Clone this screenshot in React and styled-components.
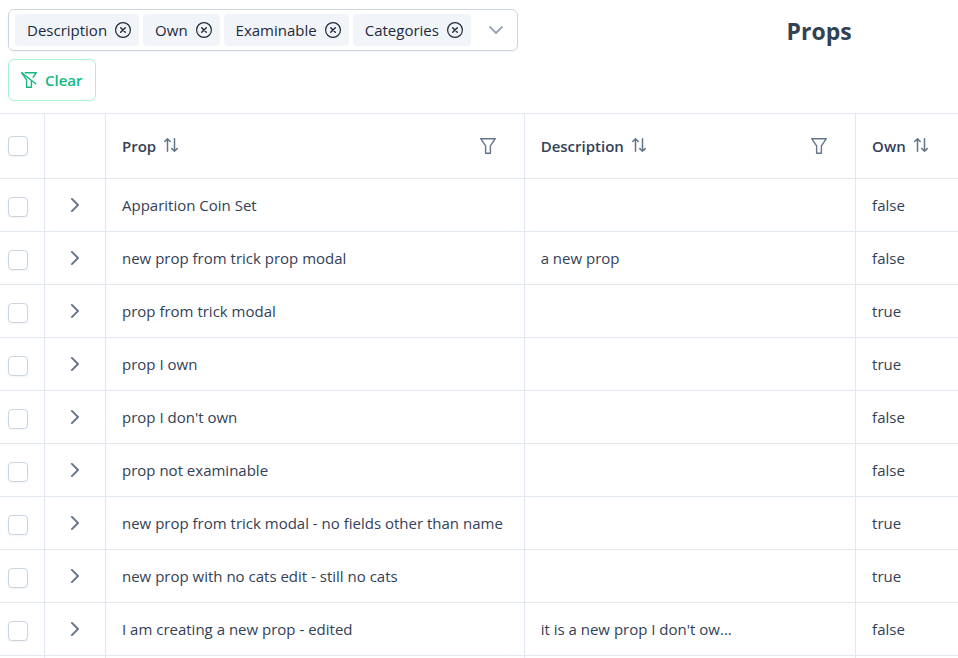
import React, { useState } from "react";
import styled, { createGlobalStyle } from "styled-components";

const GlobalStyle = createGlobalStyle`
  * {
    box-sizing: border-box;
  }

  body {
    margin: 0;
    overflow: hidden;
    background: #ffffff;
    color: #334155;
    font-family: "Open Sans", "Noto Sans", sans-serif;
    font-size: 15px;
    line-height: 24px;
  }

  button {
    font: inherit;
    cursor: pointer;
  }
`;

const initialProps = [
  { id: 1, name: "Apparition Coin Set", description: "", own: false },
  { id: 2, name: "new prop from trick prop modal", description: "a new prop", own: false },
  { id: 3, name: "prop from trick modal", description: "", own: true },
  { id: 4, name: "prop I own", description: "", own: true },
  { id: 5, name: "prop I don't own", description: "", own: false },
  { id: 6, name: "prop not examinable", description: "", own: false },
  { id: 7, name: "new prop from trick modal - no fields other than name", description: "", own: true },
  { id: 8, name: "new prop with no cats edit - still no cats", description: "", own: true },
  { id: 9, name: "I am creating a new prop - edited", description: "it is a new prop I don't ow...", own: false },
];

const allColumns = ["Description", "Own", "Examinable", "Categories"];

function TimesCircleIcon() {
  return (
    <svg width="16" height="16" viewBox="0 0 16 16" fill="none" stroke="currentColor" strokeLinecap="round">
      <circle cx="8" cy="8" r="7.4" strokeWidth="1.2" />
      <path d="M5.7 5.7l4.6 4.6M10.3 5.7l-4.6 4.6" strokeWidth="1.4" />
    </svg>
  );
}

function ChevronDownIcon() {
  return (
    <svg width="14" height="14" viewBox="0 0 14 14" fill="none" stroke="currentColor" strokeWidth="1.8" strokeLinecap="round" strokeLinejoin="round">
      <path d="M0.9 3.9L7 10l6.1-6.1" />
    </svg>
  );
}

function ChevronRightIcon() {
  return (
    <svg width="14" height="14" viewBox="0 0 14 14" fill="none" stroke="currentColor" strokeWidth="1.9" strokeLinecap="round" strokeLinejoin="round">
      <path d="M3.9 0.9L10 7l-6.1 6.1" />
    </svg>
  );
}

function SortIcon() {
  return (
    <svg width="14" height="16" viewBox="0 0 14 16" fill="none" stroke="currentColor" strokeWidth="1.5" strokeLinecap="round" strokeLinejoin="round">
      <path d="M3.5 13.3V0.8M0.8 3.5L3.5 0.8l2.7 2.7" />
      <path d="M10.5 0.8v12.5M7.8 10.6l2.7 2.7 2.7-2.7" />
    </svg>
  );
}

function FilterIcon() {
  return (
    <svg width="16" height="16" viewBox="0 0 16 16" fill="none" stroke="currentColor" strokeWidth="1.4" strokeLinejoin="round">
      <path d="M0.7 0.7h14.6L10.4 7.8v7.5H5.6V7.8z" />
    </svg>
  );
}

function FilterSlashIcon() {
  return (
    <svg width="16" height="16" viewBox="0 0 16 16" fill="none" stroke="currentColor" strokeWidth="1.4" strokeLinecap="round" strokeLinejoin="round">
      <path d="M4.2 0.7h11.1l-3.2 4.6" />
      <path d="M0.7 0.7l4.9 7.1v7.5h4.8V8.6" />
      <path d="M0.7 0.7l14 11" />
    </svg>
  );
}

export default function App() {
  const [columns, setColumns] = useState(allColumns);
  const [selected, setSelected] = useState([]);

  const removeColumn = (name) => {
    setColumns(columns.filter((column) => column !== name));
  };

  const toggleRow = (id) => {
    setSelected(selected.includes(id) ? selected.filter((item) => item !== id) : [...selected, id]);
  };

  const toggleAll = () => {
    setSelected(selected.length === initialProps.length ? [] : initialProps.map((prop) => prop.id));
  };

  return (
    <>
      <GlobalStyle />
      <Header>
        <Controls>
          <MultiSelect>
            {columns.map((column) => (
              <Chip key={column}>
                {column}
                <ChipRemove type="button" aria-label={`Remove ${column}`} onClick={() => removeColumn(column)}>
                  <TimesCircleIcon />
                </ChipRemove>
              </Chip>
            ))}
            <Trigger type="button" aria-label="Choose columns" onClick={() => setColumns(allColumns)}>
              <ChevronDownIcon />
            </Trigger>
          </MultiSelect>
          <ClearButton type="button" onClick={() => setSelected([])}>
            <FilterSlashIcon />
            Clear
          </ClearButton>
        </Controls>
        <Title>Props</Title>
      </Header>

      <Table>
        <colgroup>
          <Col $width="45px" />
          <Col $width="61px" />
          <Col $width="43.7%" />
          <Col $width="34.6%" />
          <Col />
        </colgroup>
        <thead>
          <tr>
            <HeadCell $narrow>
              <Checkbox
                type="checkbox"
                aria-label="Select all props"
                checked={selected.length === initialProps.length}
                onChange={toggleAll}
              />
            </HeadCell>
            <HeadCell />
            <HeadCell>
              <ColumnHeader>
                <SortButton type="button">
                  Prop <SortIcon />
                </SortButton>
                <IconButton type="button" aria-label="Filter by prop">
                  <FilterIcon />
                </IconButton>
              </ColumnHeader>
            </HeadCell>
            <HeadCell>
              <ColumnHeader>
                <SortButton type="button">
                  Description <SortIcon />
                </SortButton>
                <IconButton type="button" aria-label="Filter by description">
                  <FilterIcon />
                </IconButton>
              </ColumnHeader>
            </HeadCell>
            <HeadCell>
              <ColumnHeader>
                <SortButton type="button">
                  Own <SortIcon />
                </SortButton>
              </ColumnHeader>
            </HeadCell>
          </tr>
        </thead>
        <tbody>
          {initialProps.map((prop) => (
            <tr key={prop.id}>
              <CheckCell>
                <Checkbox
                  type="checkbox"
                  aria-label={`Select ${prop.name}`}
                  checked={selected.includes(prop.id)}
                  onChange={() => toggleRow(prop.id)}
                />
              </CheckCell>
              <Cell>
                <IconButton type="button" aria-label={`Expand ${prop.name}`}>
                  <ChevronRightIcon />
                </IconButton>
              </Cell>
              <Cell>{prop.name}</Cell>
              <Cell>{prop.description}</Cell>
              <Cell>{String(prop.own)}</Cell>
            </tr>
          ))}
          {/* keeps the column lines going below the last prop */}
          <tr>
            <Cell />
            <Cell />
            <Cell />
            <Cell />
            <Cell />
          </tr>
        </tbody>
      </Table>
    </>
  );
}

const Header = styled.header`
  display: grid;
  grid-template-columns: 13fr 5fr;
  padding: 9px 8px 12px;
`;

const Controls = styled.div`
  display: flex;
  flex-direction: column;
  align-items: flex-start;
  gap: 8px;
`;

const MultiSelect = styled.div`
  display: flex;
  align-items: center;
  gap: 4px;
  height: 42px;
  padding-left: 6px;
  border: 1px solid #cbd5e1;
  border-radius: 6px;
  box-shadow: 0 1px 2px rgba(18, 18, 23, 0.05);
`;

const Chip = styled.span`
  display: flex;
  align-items: center;
  gap: 8px;
  height: 32px;
  padding: 0 8px 0 12px;
  border-radius: 4px;
  background: #f1f5f9;
  color: #1e293b;
`;

const ChipRemove = styled.button`
  display: flex;
  padding: 0;
  border: 0;
  background: none;
  color: inherit;
`;

const Trigger = styled.button`
  display: flex;
  align-items: center;
  justify-content: center;
  width: 42px;
  height: 40px;
  padding: 0;
  border: 0;
  background: none;
  color: #94a3b8;
`;

const ClearButton = styled.button`
  display: flex;
  align-items: center;
  gap: 8px;
  height: 42px;
  padding: 0 12px;
  border: 1px solid #a7f3d0;
  border-radius: 6px;
  background: #ffffff;
  color: #10b981;
  font-weight: 600;
`;

const Title = styled.h1`
  margin: 6px 0 0;
  font-size: 23px;
  line-height: 32px;
  font-weight: 700;
  text-align: center;
`;

const Table = styled.table`
  width: 100%;
  table-layout: fixed;
  border-collapse: separate;
  border-spacing: 0;
  border-top: 1px solid #e2e8f0;
`;

const Col = styled.col`
  width: ${({ $width }) => $width || "auto"};
`;

const Cell = styled.td`
  height: 53px;
  padding: ${({ $narrow }) => ($narrow ? "0 8px" : "0 16px")};
  border-right: 1px solid #e2e8f0;
  border-bottom: 1px solid #e2e8f0;
  text-align: left;
  white-space: nowrap;

  &:last-child {
    border-right: 0;
  }
`;

const CheckCell = styled(Cell)`
  padding: 4px 8px 0;
`;

const HeadCell = styled(Cell).attrs({ as: "th" })`
  height: 65px;
  font-weight: 600;
`;

const ColumnHeader = styled.div`
  display: flex;
  align-items: center;
  justify-content: space-between;
`;

const SortButton = styled.button`
  display: flex;
  align-items: center;
  gap: 8px;
  padding: 0;
  border: 0;
  background: none;
  color: inherit;
  font-weight: 600;

  svg {
    color: #64748b;
  }
`;

const IconButton = styled.button`
  display: flex;
  align-items: center;
  justify-content: center;
  width: 28px;
  height: 28px;
  margin: 0 6px 0 0;
  padding: 0;
  border: 0;
  background: none;
  color: #64748b;
`;

const Checkbox = styled.input`
  appearance: none;
  display: block;
  width: 20px;
  height: 20px;
  margin: 0;
  border: 1px solid #cbd5e1;
  border-radius: 4px;
  background: #ffffff;
  box-shadow: 0 1px 2px rgba(18, 18, 23, 0.05);

  &:checked {
    border-color: #10b981;
    background: #10b981;
  }
`;
